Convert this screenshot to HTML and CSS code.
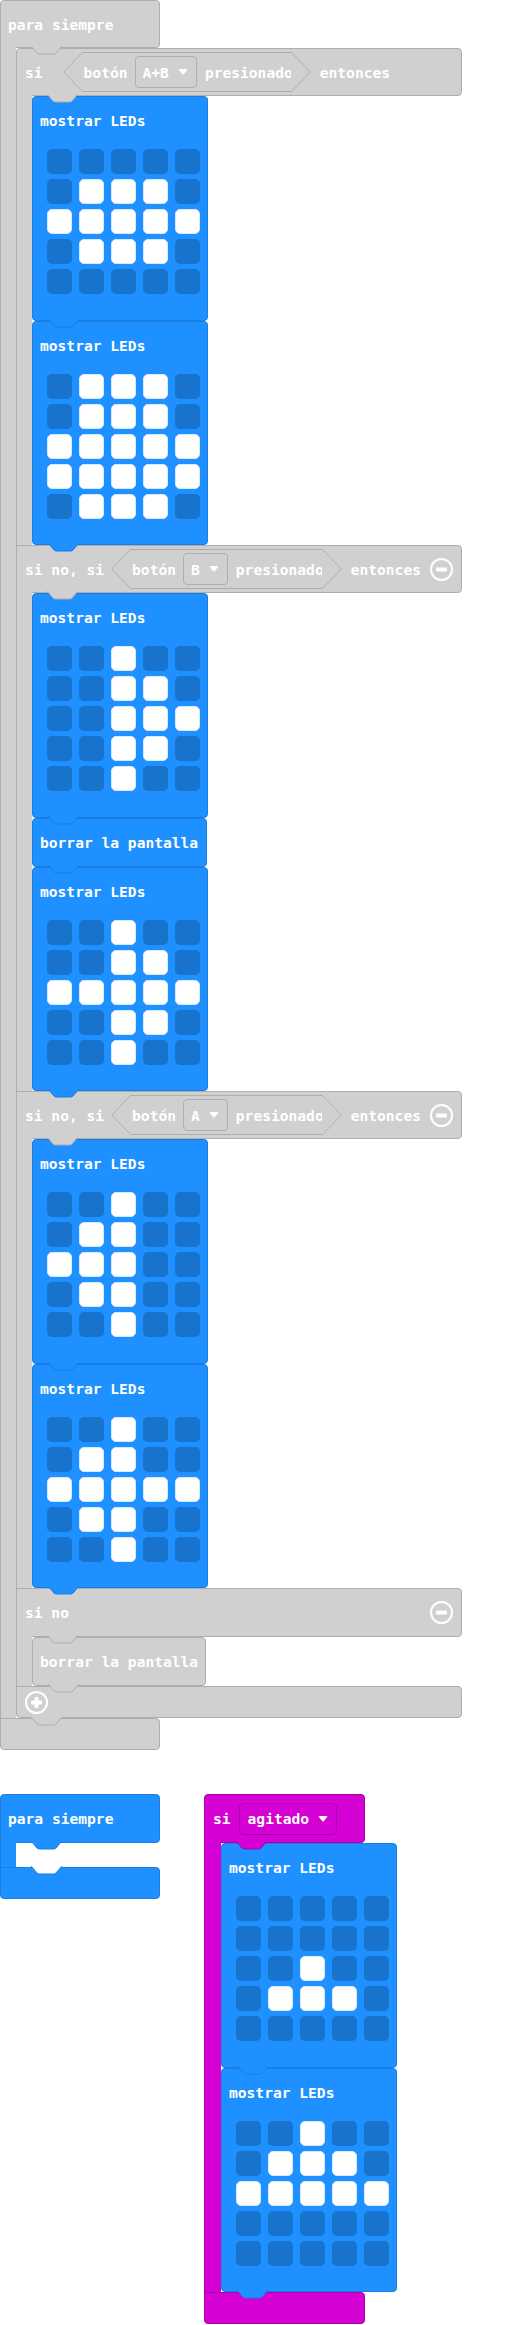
FILE: index.html
```html
<!DOCTYPE html>
<html lang="es">

<head>
    <meta charset="UTF-8">
    <meta name="viewport" content="width=device-width, initial-scale=1.0">
    <title>para siempre</title>
    <link rel="stylesheet" href="styles.css">
</head>

<body>
    <div class="workspace">

        <!-- bloque gris: para siempre / si ... entonces -->
        <div class="cblock gray forever">
            <div class="row head">
                <span>para siempre</span>
                <svg class="tab in" viewBox="0 0 31 9"><path d="M0 0 L0.5 0.5 L6 7 Q7 8 8.5 8 H22.5 Q24 8 25 7 L30.5 0.5 L31 0"/></svg>
            </div>
            <div class="arm">
                <div class="spine"></div>
                <div class="stack">

                    <div class="cblock gray ifblock">
                        <div class="row top">
                            <span>si</span>
                            <div class="hex first">
                                <svg class="hex-end" viewBox="0 0 20 40"><path d="M20 0.5 H19.5 L0.7 20 L19.5 39.5 H20"/></svg>
                                <div class="hex-mid">
                                    <span>botón</span>
                                    <div class="dd"><span>A+B</span><i class="caret"></i></div>
                                    <span class="last">presionado</span>
                                </div>
                                <svg class="hex-end" viewBox="0 0 20 40"><path d="M0 0.5 H0.5 L19.3 20 L0.5 39.5 H0"/></svg>
                            </div>
                            <span class="then">entonces</span>
                            <svg class="tab in" viewBox="0 0 31 9"><path d="M0 0 L0.5 0.5 L6 7 Q7 8 8.5 8 H22.5 Q24 8 25 7 L30.5 0.5 L31 0"/></svg>
                        </div>
                        <div class="arm">
                            <div class="spine"></div>
                            <div class="stack">
                                <div class="stmt leds blue">
                                    <div class="title">mostrar LEDs</div>
                                    <div class="grid">
                                        <i></i><i></i><i></i><i></i><i></i>
                                        <i></i><i class="on"></i><i class="on"></i><i class="on"></i><i></i>
                                        <i class="on"></i><i class="on"></i><i class="on"></i><i class="on"></i><i class="on"></i>
                                        <i></i><i class="on"></i><i class="on"></i><i class="on"></i><i></i>
                                        <i></i><i></i><i></i><i></i><i></i>
                                    </div>
                                    <svg class="tab" viewBox="0 0 31 9"><path d="M0 0 L0.5 0.5 L6 7 Q7 8 8.5 8 H22.5 Q24 8 25 7 L30.5 0.5 L31 0"/></svg>
                                </div>
                                <div class="stmt leds blue">
                                    <div class="title">mostrar LEDs</div>
                                    <div class="grid">
                                        <i></i><i class="on"></i><i class="on"></i><i class="on"></i><i></i>
                                        <i></i><i class="on"></i><i class="on"></i><i class="on"></i><i></i>
                                        <i class="on"></i><i class="on"></i><i class="on"></i><i class="on"></i><i class="on"></i>
                                        <i class="on"></i><i class="on"></i><i class="on"></i><i class="on"></i><i class="on"></i>
                                        <i></i><i class="on"></i><i class="on"></i><i class="on"></i><i></i>
                                    </div>
                                    <svg class="tab" viewBox="0 0 31 9"><path d="M0 0 L0.5 0.5 L6 7 Q7 8 8.5 8 H22.5 Q24 8 25 7 L30.5 0.5 L31 0"/></svg>
                                </div>
                            </div>
                        </div>

                        <div class="row mid">
                            <span>si no, si</span>
                            <div class="hex">
                                <svg class="hex-end" viewBox="0 0 20 40"><path d="M20 0.5 H19.5 L0.7 20 L19.5 39.5 H20"/></svg>
                                <div class="hex-mid">
                                    <span>botón</span>
                                    <div class="dd"><span>B</span><i class="caret"></i></div>
                                    <span class="last">presionado</span>
                                </div>
                                <svg class="hex-end" viewBox="0 0 20 40"><path d="M0 0.5 H0.5 L19.3 20 L0.5 39.5 H0"/></svg>
                            </div>
                            <span class="then">entonces</span>
                            <svg class="btn" viewBox="0 0 23 23"><circle cx="11.5" cy="11.5" r="10.5"/><rect x="6" y="9.5" width="11" height="4" rx="1"/></svg>
                            <svg class="tab in" viewBox="0 0 31 9"><path d="M0 0 L0.5 0.5 L6 7 Q7 8 8.5 8 H22.5 Q24 8 25 7 L30.5 0.5 L31 0"/></svg>
                        </div>
                        <div class="arm">
                            <div class="spine"></div>
                            <div class="stack">
                                <div class="stmt leds blue">
                                    <div class="title">mostrar LEDs</div>
                                    <div class="grid">
                                        <i></i><i></i><i class="on"></i><i></i><i></i>
                                        <i></i><i></i><i class="on"></i><i class="on"></i><i></i>
                                        <i></i><i></i><i class="on"></i><i class="on"></i><i class="on"></i>
                                        <i></i><i></i><i class="on"></i><i class="on"></i><i></i>
                                        <i></i><i></i><i class="on"></i><i></i><i></i>
                                    </div>
                                    <svg class="tab" viewBox="0 0 31 9"><path d="M0 0 L0.5 0.5 L6 7 Q7 8 8.5 8 H22.5 Q24 8 25 7 L30.5 0.5 L31 0"/></svg>
                                </div>
                                <div class="stmt clear blue">
                                    <span>borrar la pantalla</span>
                                    <svg class="tab" viewBox="0 0 31 9"><path d="M0 0 L0.5 0.5 L6 7 Q7 8 8.5 8 H22.5 Q24 8 25 7 L30.5 0.5 L31 0"/></svg>
                                </div>
                                <div class="stmt leds blue">
                                    <div class="title">mostrar LEDs</div>
                                    <div class="grid">
                                        <i></i><i></i><i class="on"></i><i></i><i></i>
                                        <i></i><i></i><i class="on"></i><i class="on"></i><i></i>
                                        <i class="on"></i><i class="on"></i><i class="on"></i><i class="on"></i><i class="on"></i>
                                        <i></i><i></i><i class="on"></i><i class="on"></i><i></i>
                                        <i></i><i></i><i class="on"></i><i></i><i></i>
                                    </div>
                                    <svg class="tab" viewBox="0 0 31 9"><path d="M0 0 L0.5 0.5 L6 7 Q7 8 8.5 8 H22.5 Q24 8 25 7 L30.5 0.5 L31 0"/></svg>
                                </div>
                            </div>
                        </div>

                        <div class="row mid">
                            <span>si no, si</span>
                            <div class="hex">
                                <svg class="hex-end" viewBox="0 0 20 40"><path d="M20 0.5 H19.5 L0.7 20 L19.5 39.5 H20"/></svg>
                                <div class="hex-mid">
                                    <span>botón</span>
                                    <div class="dd"><span>A</span><i class="caret"></i></div>
                                    <span class="last">presionado</span>
                                </div>
                                <svg class="hex-end" viewBox="0 0 20 40"><path d="M0 0.5 H0.5 L19.3 20 L0.5 39.5 H0"/></svg>
                            </div>
                            <span class="then">entonces</span>
                            <svg class="btn" viewBox="0 0 23 23"><circle cx="11.5" cy="11.5" r="10.5"/><rect x="6" y="9.5" width="11" height="4" rx="1"/></svg>
                            <svg class="tab in" viewBox="0 0 31 9"><path d="M0 0 L0.5 0.5 L6 7 Q7 8 8.5 8 H22.5 Q24 8 25 7 L30.5 0.5 L31 0"/></svg>
                        </div>
                        <div class="arm">
                            <div class="spine"></div>
                            <div class="stack">
                                <div class="stmt leds blue">
                                    <div class="title">mostrar LEDs</div>
                                    <div class="grid">
                                        <i></i><i></i><i class="on"></i><i></i><i></i>
                                        <i></i><i class="on"></i><i class="on"></i><i></i><i></i>
                                        <i class="on"></i><i class="on"></i><i class="on"></i><i></i><i></i>
                                        <i></i><i class="on"></i><i class="on"></i><i></i><i></i>
                                        <i></i><i></i><i class="on"></i><i></i><i></i>
                                    </div>
                                    <svg class="tab" viewBox="0 0 31 9"><path d="M0 0 L0.5 0.5 L6 7 Q7 8 8.5 8 H22.5 Q24 8 25 7 L30.5 0.5 L31 0"/></svg>
                                </div>
                                <div class="stmt leds blue">
                                    <div class="title">mostrar LEDs</div>
                                    <div class="grid">
                                        <i></i><i></i><i class="on"></i><i></i><i></i>
                                        <i></i><i class="on"></i><i class="on"></i><i></i><i></i>
                                        <i class="on"></i><i class="on"></i><i class="on"></i><i class="on"></i><i class="on"></i>
                                        <i></i><i class="on"></i><i class="on"></i><i></i><i></i>
                                        <i></i><i></i><i class="on"></i><i></i><i></i>
                                    </div>
                                    <svg class="tab" viewBox="0 0 31 9"><path d="M0 0 L0.5 0.5 L6 7 Q7 8 8.5 8 H22.5 Q24 8 25 7 L30.5 0.5 L31 0"/></svg>
                                </div>
                            </div>
                        </div>

                        <div class="row mid else">
                            <span>si no</span>
                            <svg class="btn" viewBox="0 0 23 23"><circle cx="11.5" cy="11.5" r="10.5"/><rect x="6" y="9.5" width="11" height="4" rx="1"/></svg>
                            <svg class="tab in" viewBox="0 0 31 9"><path d="M0 0 L0.5 0.5 L6 7 Q7 8 8.5 8 H22.5 Q24 8 25 7 L30.5 0.5 L31 0"/></svg>
                        </div>
                        <div class="arm">
                            <div class="spine"></div>
                            <div class="stack">
                                <div class="stmt clear gray narrow">
                                    <span>borrar la pantalla</span>
                                    <svg class="tab" viewBox="0 0 31 9"><path d="M0 0 L0.5 0.5 L6 7 Q7 8 8.5 8 H22.5 Q24 8 25 7 L30.5 0.5 L31 0"/></svg>
                                </div>
                            </div>
                        </div>
                        <div class="row foot">
                            <svg class="btn plus" viewBox="0 0 23 23"><circle cx="11.5" cy="11.5" r="10.5"/><rect x="6" y="9.5" width="11" height="4" rx="1"/><rect x="9.5" y="6" width="4" height="11" rx="1"/></svg>
                        </div>
                        <svg class="tab" viewBox="0 0 31 9"><path d="M0 0 L0.5 0.5 L6 7 Q7 8 8.5 8 H22.5 Q24 8 25 7 L30.5 0.5 L31 0"/></svg>
                    </div>

                </div>
            </div>
            <div class="row foot"></div>
        </div>

        <div class="pair">
            <!-- para siempre vacío -->
            <div class="cblock blue forever tall">
                <div class="row head">
                    <span>para siempre</span>
                    <svg class="tab in" viewBox="0 0 31 9"><path d="M0 0 L0.5 0.5 L6 7 Q7 8 8.5 8 H22.5 Q24 8 25 7 L30.5 0.5 L31 0"/></svg>
                </div>
                <div class="arm">
                    <div class="spine"></div>
                    <div class="slot">
                        <svg class="tab" viewBox="0 0 31 9"><path d="M0 0 L0.5 0.5 L6 7 Q7 8 8.5 8 H22.5 Q24 8 25 7 L30.5 0.5 L31 0"/></svg>
                    </div>
                </div>
                <div class="row foot"></div>
            </div>

            <!-- si agitado -->
            <div class="cblock magenta event">
                <div class="row head">
                    <span>si</span>
                    <div class="dd"><span>agitado</span><i class="caret"></i></div>
                    <svg class="tab in" viewBox="0 0 31 9"><path d="M0 0 L0.5 0.5 L6 7 Q7 8 8.5 8 H22.5 Q24 8 25 7 L30.5 0.5 L31 0"/></svg>
                </div>
                <div class="arm">
                    <div class="spine"></div>
                    <div class="stack">
                        <div class="stmt leds blue">
                            <div class="title">mostrar LEDs</div>
                            <div class="grid">
                                <i></i><i></i><i></i><i></i><i></i>
                                <i></i><i></i><i></i><i></i><i></i>
                                <i></i><i></i><i class="on"></i><i></i><i></i>
                                <i></i><i class="on"></i><i class="on"></i><i class="on"></i><i></i>
                                <i></i><i></i><i></i><i></i><i></i>
                            </div>
                            <svg class="tab" viewBox="0 0 31 9"><path d="M0 0 L0.5 0.5 L6 7 Q7 8 8.5 8 H22.5 Q24 8 25 7 L30.5 0.5 L31 0"/></svg>
                        </div>
                        <div class="stmt leds blue">
                            <div class="title">mostrar LEDs</div>
                            <div class="grid">
                                <i></i><i></i><i class="on"></i><i></i><i></i>
                                <i></i><i class="on"></i><i class="on"></i><i class="on"></i><i></i>
                                <i class="on"></i><i class="on"></i><i class="on"></i><i class="on"></i><i class="on"></i>
                                <i></i><i></i><i></i><i></i><i></i>
                                <i></i><i></i><i></i><i></i><i></i>
                            </div>
                            <svg class="tab" viewBox="0 0 31 9"><path d="M0 0 L0.5 0.5 L6 7 Q7 8 8.5 8 H22.5 Q24 8 25 7 L30.5 0.5 L31 0"/></svg>
                        </div>
                    </div>
                </div>
                <div class="row foot"></div>
            </div>
        </div>

    </div>
</body>

</html>
```

FILE: styles.css
```css
* {
    box-sizing: border-box;
}

html,
body {
    margin: 0;
    background: #ffffff;
}

body {
    font-family: "DejaVu Sans Mono", "Liberation Mono", monospace;
    font-weight: bold;
    font-size: 14.6px;
    color: #ffffff;
    overflow: hidden;
}

.workspace {
    width: 514px;
}

/* colours per block category */
.gray {
    --fill: #d0d0d0;
    --line: #aeaeae;
}

.blue {
    --fill: #1e90ff;
    --line: #1b7de0;
}

.magenta {
    --fill: #d400d4;
    --line: #a800a8;
}

/* C-shaped blocks */
.cblock {
    position: relative;
    display: flex;
    flex-direction: column;
    align-items: flex-start;
}

.row {
    position: relative;
    display: flex;
    align-items: center;
    height: 48px;
    padding-left: 8px;
    background: var(--fill);
    border: 1px solid var(--line);
    border-radius: 0 4px 4px 0;
    white-space: nowrap;
}

.row.head {
    border-radius: 4px 4px 4px 0;
    padding-left: 7px;
}

.row.top {
    border-radius: 4px 4px 4px 0;
}

.row.foot {
    height: 32px;
    border-radius: 0 4px 4px 4px;
}

.forever > .row {
    width: 160px;
}

.ifblock > .row {
    width: 446px;
}

.ifblock > .row.else {
    height: 49px;
}

.arm {
    display: flex;
}

.spine {
    position: relative;
    width: 16px;
    margin: -1px 0;
    background: var(--fill);
    border-left: 1px solid var(--line);
}

.stack {
    display: flex;
    flex-direction: column;
    align-items: flex-start;
}

/* puzzle tab under each block */
.tab {
    position: absolute;
    left: 15px;
    top: calc(100% - 1px);
    width: 31px;
    height: 9px;
    z-index: 2;
    overflow: visible;
}

.tab.in {
    left: 30px;
}

.tab path {
    fill: var(--fill);
    stroke: var(--line);
    stroke-width: 1;
}

/* boolean hexagon */
.hex {
    display: flex;
    align-items: center;
    height: 40px;
    margin-left: 7px;
}

.hex.first {
    margin-left: 20px;
}

.hex-end {
    width: 20px;
    height: 40px;
}

.hex-end path {
    fill: var(--fill);
    stroke: var(--line);
    stroke-width: 1;
}

.hex-mid {
    display: flex;
    align-items: center;
    height: 40px;
    padding-left: 1px;
    background: var(--fill);
    border-top: 1px solid var(--line);
    border-bottom: 1px solid var(--line);
}

.hex-mid .last {
    margin-right: -2px;
}

.dd {
    display: flex;
    align-items: center;
    gap: 9px;
    height: 32px;
    margin: 0 8px 0 7px;
    padding: 0 8px 0 7px;
    background: var(--fill);
    border: 1px solid var(--line);
    border-radius: 4px;
}

.caret {
    width: 0;
    height: 0;
    border-left: 5px solid transparent;
    border-right: 5px solid transparent;
    border-top: 6px solid #ffffff;
    border-radius: 2px;
}

.then {
    margin-left: 9px;
}

.btn {
    width: 23px;
    height: 23px;
    margin-left: auto;
    margin-right: 8px;
}

.btn.plus {
    margin-left: 0;
}

.btn circle {
    fill: none;
    stroke: #ffffff;
    stroke-width: 2;
}

.btn rect {
    fill: #ffffff;
}

/* statement blocks */
.stmt {
    position: relative;
    width: 176px;
    background: var(--fill);
    border: 1px solid var(--line);
    border-radius: 4px;
}

.clear {
    display: flex;
    align-items: center;
    height: 49px;
    width: 175px;
    padding-left: 7px;
    white-space: nowrap;
}

.clear.narrow {
    width: 174px;
}

.leds {
    height: 224.5px;
}

.leds .title {
    height: 47px;
    line-height: 47px;
    padding-left: 7px;
}

.grid {
    display: grid;
    grid-template-columns: repeat(5, 25px);
    grid-auto-rows: 25px;
    column-gap: 7px;
    row-gap: 5px;
    margin: 5px 0 0 14px;
}

.grid i {
    display: block;
    border-radius: 5px;
    background: #1873cc;
}

.grid i.on {
    background: #ffffff;
    border: 1px solid #d6eaff;
}

/* second group of blocks */
.pair {
    display: flex;
    align-items: flex-start;
    gap: 44px;
    margin-top: 44px;
}

.tall > .row.head {
    height: 49px;
}

.slot {
    position: relative;
    width: 40px;
    height: 24px;
    --fill: #ffffff;
}

.event > .row {
    width: 161px;
}

.event > .row.head {
    height: 49px;
    padding-left: 8px;
}

.event > .row.head .dd {
    margin-left: 8px;
    padding-left: 8px;
}

.event .spine {
    width: 17px;
}

.event > .row .tab.in {
    left: 31px;
}
```
